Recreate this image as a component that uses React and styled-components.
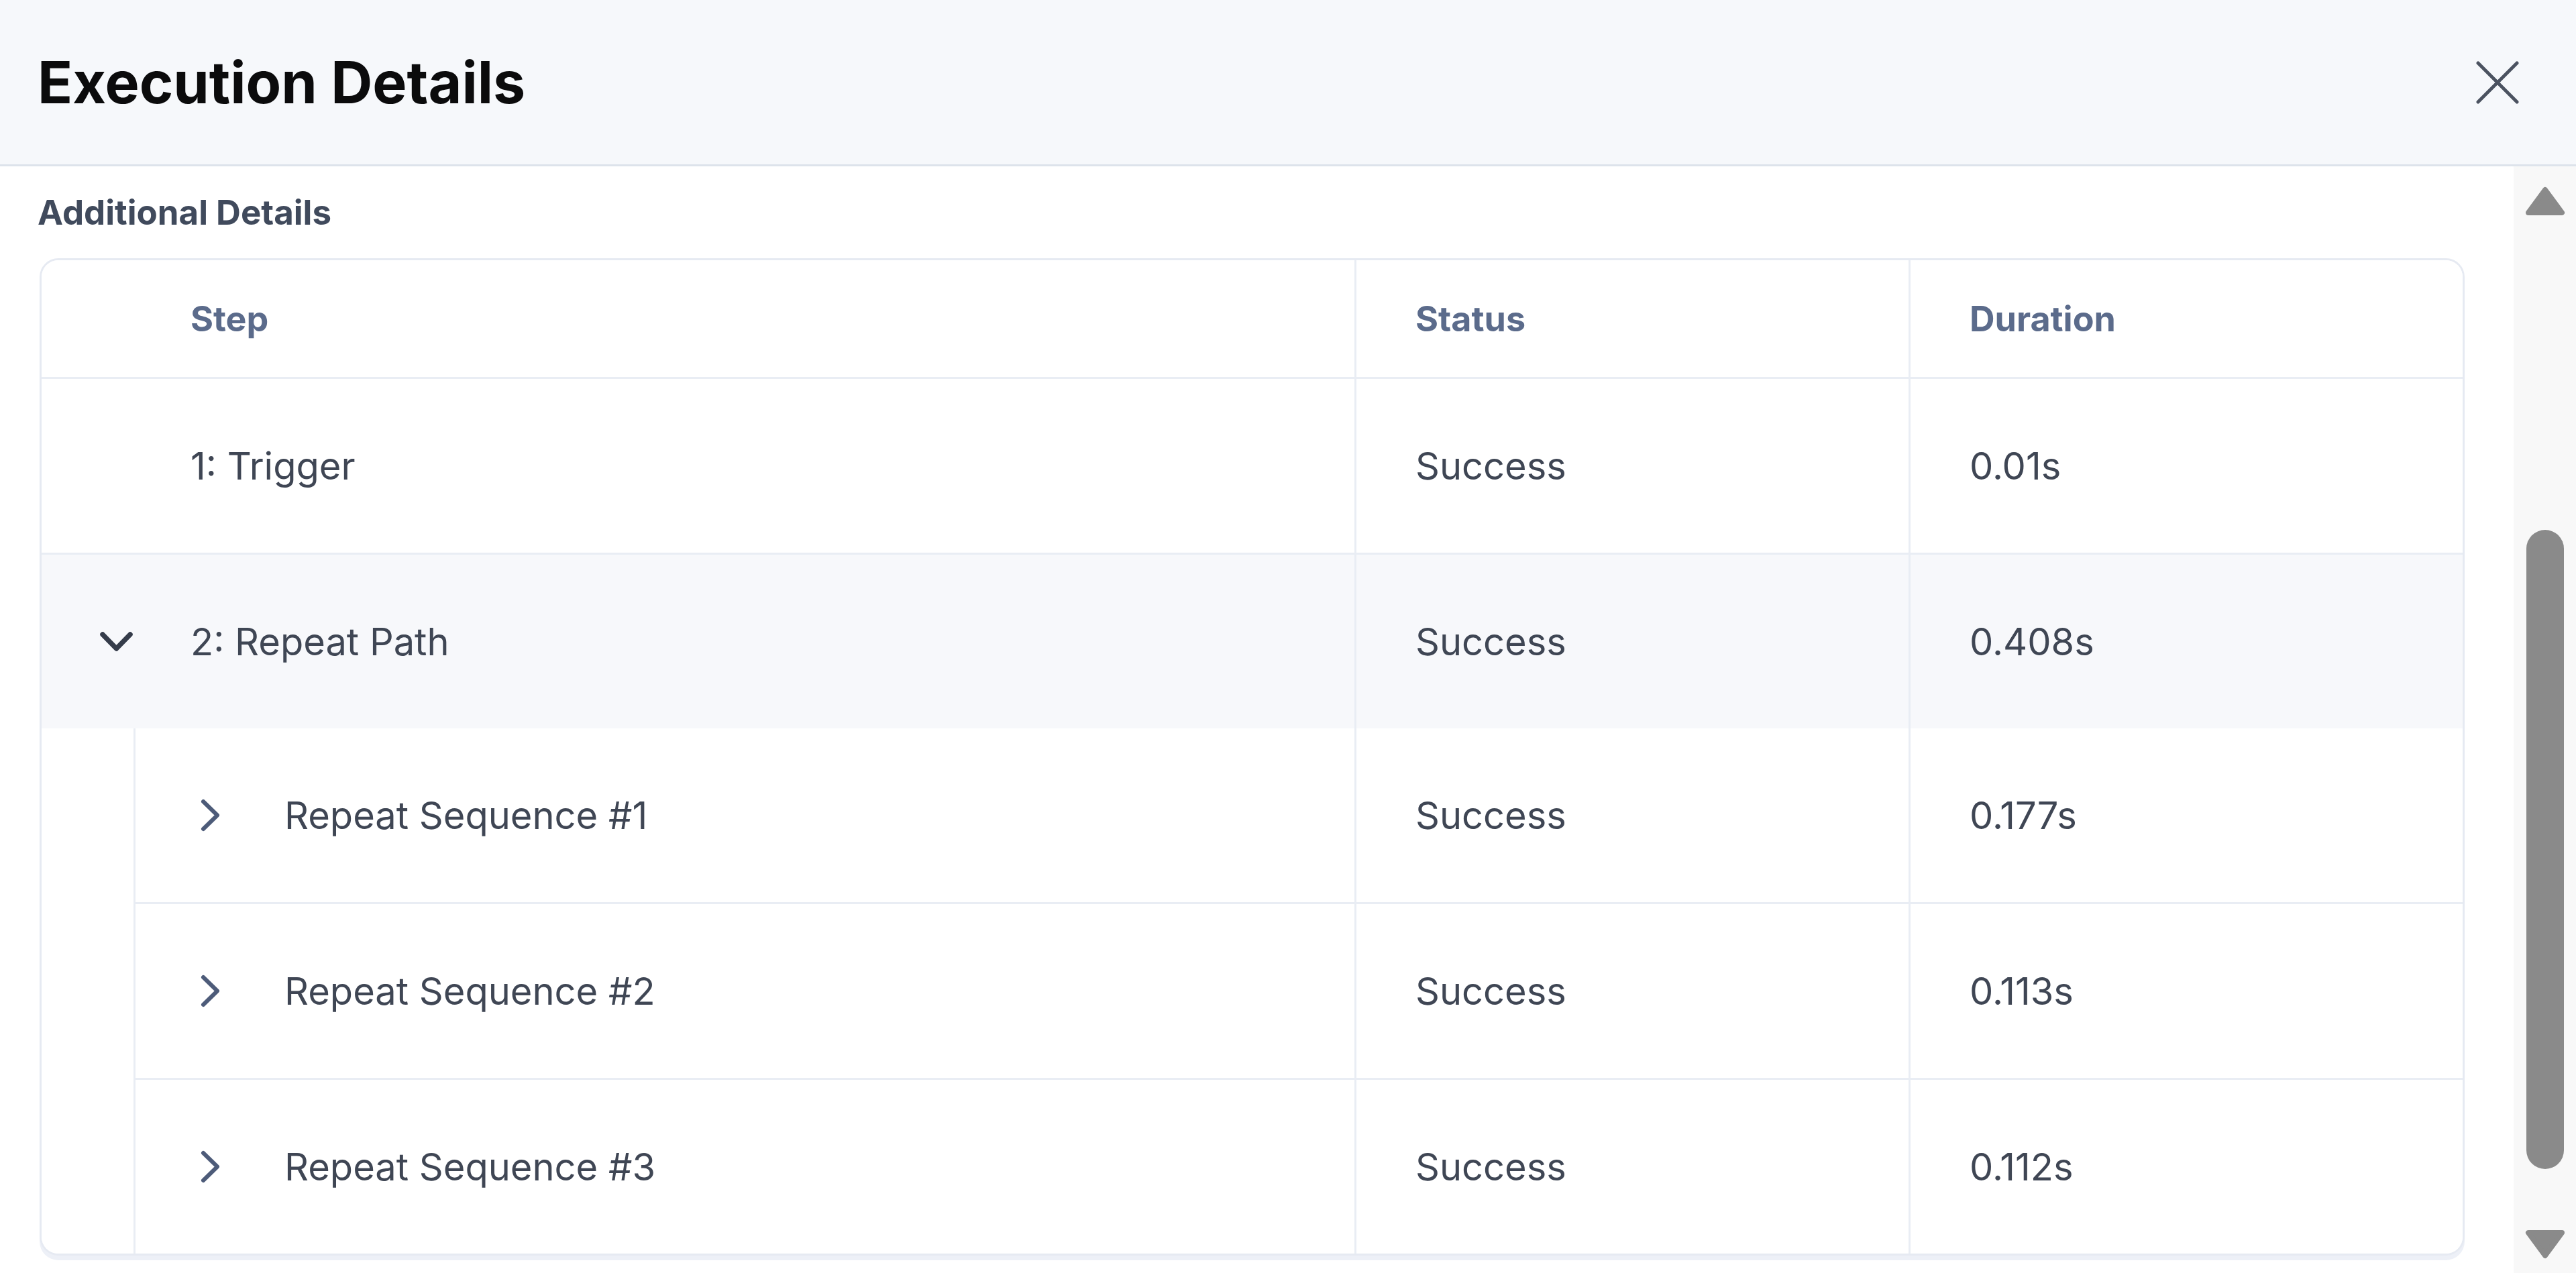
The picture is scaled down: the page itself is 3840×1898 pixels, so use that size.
import React from 'react';
import styled, { createGlobalStyle } from 'styled-components';

const GlobalStyle = createGlobalStyle`
  html, body {
    margin: 0;
    padding: 0;
    background: #ffffff;
  }
  body {
    font-family: Inter, "Noto Sans", sans-serif;
  }
`;

const Page = styled.div`
  width: 3840px;
  height: 1898px;
  display: flex;
  flex-direction: column;
  overflow: hidden;
  background: #ffffff;
`;

const TopBar = styled.header`
  height: 245px;
  flex-shrink: 0;
  display: flex;
  align-items: center;
  justify-content: space-between;
  padding: 0 85px 0 56px;
  background: #f6f8fb;
  border-bottom: 3px solid #dde3eb;
`;

const Title = styled.h1`
  margin: 0;
  font-size: 86px;
  font-weight: 700;
  color: #0b0b0c;
`;

const CloseButton = styled.button`
  width: 64px;
  height: 64px;
  padding: 0;
  border: none;
  background: transparent;
  display: flex;
`;

const Body = styled.div`
  flex: 1;
  display: flex;
  min-height: 0;
`;

const Content = styled.main`
  flex: 1;
  padding: 0 73px 0 56px;
`;

const SectionLabel = styled.h2`
  margin: 41px 0 41px;
  font-size: 51px;
  line-height: 55px;
  font-weight: 700;
  color: #404a5c;
`;

const Card = styled.div`
  margin-left: 3px;
  border: 3px solid #e6eaf2;
  border-radius: 28px;
  overflow: hidden;
  background: #ffffff;
  box-shadow: 0 7px 0 #edf0f7;
`;

const Row = styled.div`
  display: grid;
  grid-template-columns: 1fr 826px 826px;
  height: ${(p) => p.height || 259}px;
  background: ${(p) => (p.shaded ? '#f7f8fb' : '#ffffff')};
  border-bottom: ${(p) => (p.last ? 'none' : '3px solid #e9edf4')};
`;

const Cell = styled.div`
  display: flex;
  align-items: center;
  padding-left: ${(p) => (p.step ? 0 : 88)}px;
  border-left: ${(p) => (p.step ? 'none' : '3px solid #e9edf4')};
  font-size: ${(p) => (p.head ? 52 : 56)}px;
  font-weight: ${(p) => (p.head ? 700 : 400)};
  color: ${(p) => (p.head ? '#5b6b8b' : '#3f4654')};
  white-space: nowrap;
`;

const ToggleSlot = styled.span`
  width: 222px;
  flex-shrink: 0;
  display: flex;
  justify-content: center;
  align-items: center;
`;

const SubGroup = styled.div`
  display: grid;
  grid-template-columns: 137px 1fr;
`;

const Rail = styled.div`
  background: #ffffff;
`;

const SubRows = styled.div`
  border-left: 3px solid #e9edf4;
`;

const ScrollBar = styled.aside`
  width: 93px;
  flex-shrink: 0;
  background: #f8f8f8;
  display: flex;
  flex-direction: column;
  align-items: center;
  padding: 30px 0 21px;
`;

const Thumb = styled.div`
  width: 56px;
  height: 953px;
  margin-top: 468px;
  border-radius: 28px;
  background: #8a8a8a;
`;

const DownSlot = styled.div`
  margin-top: auto;
  display: flex;
`;

const CloseIcon = () => (
  <svg width="64" height="64" viewBox="0 0 64 64">
    <path d="M3 3 L61 61 M61 3 L3 61" stroke="#4b5260" strokeWidth="5" strokeLinecap="round" fill="none" />
  </svg>
);

const ChevronDown = () => (
  <svg width="51" height="31" viewBox="0 0 51 31">
    <polyline points="5,5 25.5,26 46,5" stroke="#353c4a" strokeWidth="7.5" strokeLinecap="round" strokeLinejoin="round" fill="none" />
  </svg>
);

const ChevronRight = () => (
  <svg width="31" height="51" viewBox="0 0 31 51">
    <polyline points="5,5 26,25.5 5,46" stroke="#4d5b79" strokeWidth="6" strokeLinecap="round" strokeLinejoin="round" fill="none" />
  </svg>
);

const Arrow = ({ down }) => (
  <svg width="60" height="44" viewBox="0 0 60 44">
    <polygon
      points={down ? '5,5 55,5 30,39' : '30,5 55,39 5,39'}
      fill="#8a8a8a"
      stroke="#8a8a8a"
      strokeWidth="8"
      strokeLinejoin="round"
    />
  </svg>
);

const steps = [
  { name: '1: Trigger', status: 'Success', duration: '0.01s' },
  { name: '2: Repeat Path', status: 'Success', duration: '0.408s', open: true },
];

const sequences = [
  { name: 'Repeat Sequence #1', status: 'Success', duration: '0.177s' },
  { name: 'Repeat Sequence #2', status: 'Success', duration: '0.113s' },
  { name: 'Repeat Sequence #3', status: 'Success', duration: '0.112s' },
];

function App() {
  return (
    <Page>
      <GlobalStyle />
      <TopBar>
        <Title>Execution Details</Title>
        <CloseButton aria-label="Close">
          <CloseIcon />
        </CloseButton>
      </TopBar>

      <Body>
        <Content>
          <SectionLabel>Additional Details</SectionLabel>
          <Card>
            <Row height={174}>
              <Cell step head>
                <ToggleSlot />
                Step
              </Cell>
              <Cell head>Status</Cell>
              <Cell head>Duration</Cell>
            </Row>

            {steps.map((s) => (
              <Row key={s.name} shaded={s.open} last={s.open}>
                <Cell step>
                  <ToggleSlot>{s.open && <ChevronDown />}</ToggleSlot>
                  {s.name}
                </Cell>
                <Cell>{s.status}</Cell>
                <Cell>{s.duration}</Cell>
              </Row>
            ))}

            <SubGroup>
              <Rail />
              <SubRows>
                {sequences.map((s, i) => (
                  <Row key={s.name} last={i === sequences.length - 1}>
                    <Cell step>
                      <ToggleSlot>
                        <ChevronRight />
                      </ToggleSlot>
                      {s.name}
                    </Cell>
                    <Cell>{s.status}</Cell>
                    <Cell>{s.duration}</Cell>
                  </Row>
                ))}
              </SubRows>
            </SubGroup>
          </Card>
        </Content>

        <ScrollBar>
          <Arrow />
          <Thumb />
          <DownSlot>
            <Arrow down />
          </DownSlot>
        </ScrollBar>
      </Body>
    </Page>
  );
}

export default App;
